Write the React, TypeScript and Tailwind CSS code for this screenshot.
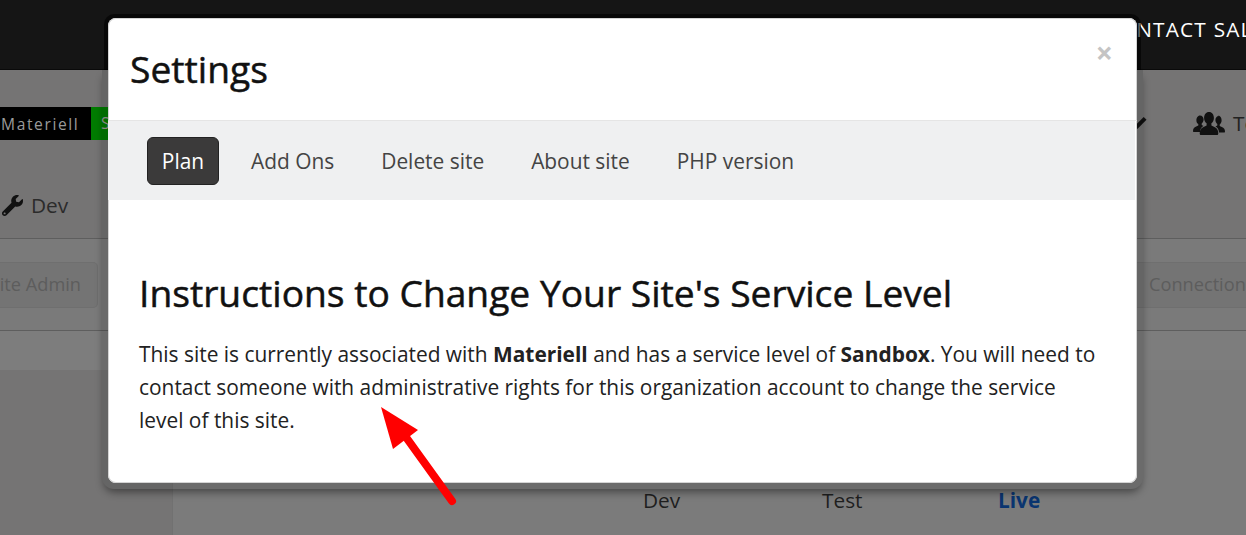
import { FaWrench } from "react-icons/fa";

const font = { fontFamily: '"Open Sans", "Noto Sans", sans-serif' };

function TeamIcon() {
  return (
    <svg width="32" height="24" viewBox="0 0 32 24" className="mr-[8px] flex-none" fill="#111">
      <path d="M7 3.5c2.2 0 3.6 1.8 3.6 4 0 1.8-.8 3.2-1.9 3.9v1.6l1.8 1c-1.7 1-2.9 2.4-3.3 4.5l-.2 1.5H0.6c-.4 0-.6-.3-.6-.7 0-2.6 1-3.6 3.2-4.7l2.1-1.1v-1.6C4.200 11.700 3.400 10.300 3.400 8.500c0-2.600 1.400-5 3.600-5z" />
      <path d="M25 3.500c2.200 0 3.600 2.400 3.600 5 0 1.800-.8 3.200-1.900 3.900v1.600l2.100 1.100c2.200 1.100 3.200 2.100 3.200 4.700 0 .4-.2.700-.6.700h-5.400l-.2-1.500c-.4-2.100-1.600-3.500-3.300-4.500l1.800-1v-1.600c-1.100-.7-1.900-2.100-1.900-3.900 0-2.200 1.400-4 3.600-4z" />
      <path d="M16 0c3 0 4.900 2.600 4.900 6 0 2.400-1.100 4.400-2.500 5.300v2.300l3 1.500c2.800 1.400 3.900 3 3.900 6.400 0 .9-.4 1.500-1.200 1.500H7.900c-.8 0-1.200-.6-1.200-1.500 0-3.400 1.100-5 3.900-6.400l3-1.500v-2.300C12.200 10.400 11.100 8.400 11.100 6c0-3.400 1.900-6 4.900-6z" />
    </svg>
  );
}

export default function App() {
  return (
    <div style={font} className="relative h-[535px] w-[1246px] overflow-hidden bg-[#7b7b7b]">
      <header className="flex h-[70px] items-start justify-end overflow-hidden border-b border-[#0a0a0a] bg-[#151515] pt-[14px]">
        <span className="-mr-[32px] whitespace-nowrap text-[20.8px] font-medium leading-[30px] tracking-[1.2px] text-white">CONTACT SALES</span>
      </header>

      <section className="flex h-[168px] flex-col bg-[#757474]">
        <div className="flex h-[70px] items-center justify-between pt-[37px]">
          <div className="flex h-[33px] items-stretch">
            <span className="flex w-[91px] items-center bg-black pl-px pt-[2px] text-[15.6px] tracking-[1.6px] text-[#9a9a9a]">Materiell</span>
            <span className="flex w-[30px] items-center bg-[#007c00] pl-[10px] text-[15.6px] text-[#9a9a9a]">S</span>
          </div>
          <div className="-mr-[41px] flex flex-none items-center">
            <span className="-mt-[2px] mr-[46px] h-[4px] w-[13px] -rotate-45 bg-[#111]" />
            <TeamIcon />
            <span className="whitespace-nowrap text-[20.8px] text-[#222]">Team</span>
          </div>
        </div>
        <div className="flex items-center gap-[8px] pl-[2px] pt-[50px] text-[20.8px] leading-[30px] text-[#2b2b2b]">
          <FaWrench className="text-[21px] text-[#111]" />
          <span>Dev</span>
        </div>
      </section>

      <section className="flex h-[93px] items-center justify-between border-y border-[#5e5e5e] bg-[#7a7a7a]">
        <div className="flex h-[46px] w-[98px] items-center justify-end overflow-hidden rounded-r-[5px] border border-l-0 border-[#6f6f6f] bg-[#747474] pr-[16px]">
          <span className="whitespace-nowrap text-[18.2px] text-[#5d5d5d]">Site Admin</span>
        </div>
        <div className="flex h-[46px] w-[110px] items-center overflow-hidden border-y border-l border-[#6f6f6f] bg-[#747474] pl-[12px]">
          <span className="whitespace-nowrap text-[18.2px] text-[#5d5d5d]">Connection Info</span>
        </div>
      </section>

      <div className="h-[39px] bg-[#7d7d7d]" />

      <section className="flex h-[165px]">
        <div className="w-[172px] bg-[#757474]" />
        <div className="flex flex-1 items-end border-l border-[#717171] pb-[20px] text-[20.8px] leading-[30px] text-[#1f1f1f]">
          <span className="ml-[470px] w-[179px]">Dev</span>
          <span className="w-[176px]">Test</span>
          <span className="font-bold text-[#0a3570]">Live</span>
        </div>
      </section>

      <div className="absolute left-[102px] top-[70px] h-[419px] w-[1041px] rounded-b-[12px] bg-black/[0.13] shadow-[0_5px_8px_-2px_rgba(0,0,0,0.45)]" />
      <div className="absolute left-[104px] top-[14px] h-[56px] w-[1037px] rounded-t-[10px] bg-black/60" />

      <div className="absolute left-[108px] top-[18px] h-[465px] w-[1029px] overflow-hidden rounded-[8px] bg-white shadow-[inset_0_0_0_1px_#d4d4d4]">
        <div className="flex h-[103px] items-start justify-between border-b border-[#e5e5e5] pl-[22px] pr-[24px]">
          <h4 className="pt-[27px] text-[37.2px] leading-[48px] text-[#111] [-webkit-text-stroke:0.5px_#111]">Settings</h4>
          <span className="pt-[19px] text-[30px] font-bold leading-[32px] text-[#c4c4c4]">×</span>
        </div>
        <nav className="mr-[2px] flex h-[79px] items-center bg-[#eff0f1] pl-[39px] text-[20.9px] text-[#444]">
          <span className="flex h-[48px] w-[72px] items-center justify-center rounded-[6px] border border-[#222] bg-[#3b3a3a] pt-[2px] text-white">Plan</span>
          <span className="ml-[32px] pt-[2px]">Add Ons</span>
          <span className="ml-[47px] pt-[2px]">Delete site</span>
          <span className="ml-[47px] pt-[2px]">About site</span>
          <span className="ml-[47px] pt-[2px]">PHP version</span>
        </nav>
        <div className="pl-[31px] pr-[38px] pt-[66px]">
          <h2 className="text-[37.2px] leading-[54px] text-[#111] [-webkit-text-stroke:0.5px_#111]">Instructions to Change Your Site's Service Level</h2>
          <p className="mt-[18px] text-[20.9px] leading-[33px] text-[#222]">
            This site is currently associated with <b>Materiell</b> and has a service level of <b>Sandbox</b>. You will need to contact someone with administrative rights for this organization account to change the service level of this site.
          </p>
        </div>
      </div>

      <svg className="absolute left-[380px] top-[400px]" width="90" height="115" viewBox="380 400 90 115">
        <path d="M452 501 L403 433" stroke="#ff0000" strokeWidth="8" strokeLinecap="round" fill="none" />
        <path d="M381 407 L418 430 L393 449 Z" fill="#ff0000" />
      </svg>
    </div>
  );
}
